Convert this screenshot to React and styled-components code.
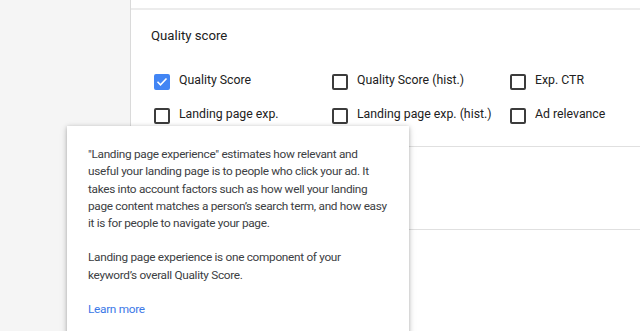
import React from 'react';
import styled, { createGlobalStyle } from 'styled-components';

const GlobalStyle = createGlobalStyle`
  html, body {
    margin: 0;
    padding: 0;
    height: 331px;
    overflow: hidden;
    background: #ffffff;
    font-family: Roboto, "Liberation Sans", Arial, sans-serif;
  }
`;

const Page = styled.div`
  position: relative;
  display: grid;
  grid-template-columns: 131px 1fr;
  height: 331px;
`;

const Sidebar = styled.aside`
  background: #f5f5f5;
  border-right: 1px solid #dadada;
`;

const Main = styled.main`
  display: flex;
  flex-direction: column;
`;

const TopStrip = styled.div`
  height: 8px;
  border-bottom: 2px solid #ececec;
`;

const Section = styled.section`
  padding: ${(p) => p.padding || '0 20px'};
  height: ${(p) => p.height || 'auto'};
  border-bottom: 1px solid #e0e0e0;
`;

const Heading = styled.h3`
  margin: 0 0 17px;
  font-size: 13.2px;
  line-height: 20px;
  font-weight: 400;
  color: #212121;
`;

const OptionGrid = styled.div`
  display: grid;
  grid-template-columns: 178px 178px 1fr;
  grid-auto-rows: 34px;
`;

const Option = styled.label`
  display: flex;
  align-items: center;
  gap: 9px;
  padding-left: 3px;
  font-size: 12.3px;
  color: #212121;
`;

const Box = styled.span`
  box-sizing: border-box;
  width: 16px;
  height: 16px;
  margin-top: 3px;
  border-radius: 2px;
  border: 2px solid ${(p) => (p.checked ? '#4285f4' : '#3c3c3c')};
  background: ${(p) => (p.checked ? '#4285f4' : '#fff')};
  display: flex;
  align-items: center;
  justify-content: center;
`;

const Popup = styled.div`
  position: absolute;
  left: 67px;
  top: 126px;
  width: 342px;
  box-sizing: border-box;
  padding: 20px 21px 24px;
  background: #fff;
  box-shadow: 0 1px 4px rgba(0, 0, 0, 0.25), 0 2px 8px rgba(0, 0, 0, 0.12);
  font-size: 11.8px;
  letter-spacing: -0.3px;
  line-height: 17.3px;
  color: #3c4043;
`;

const Para = styled.p`
  margin: 0 0 17px;
`;

const LearnMore = styled.a`
  color: #3b78e7;
  text-decoration: none;
`;

const Check = () => (
  <svg width="13" height="13" viewBox="0 0 24 24">
    <path d="M3 12.5l6 6L21 6" fill="none" stroke="#fff" strokeWidth="3.2" />
  </svg>
);

const options = [
  { label: 'Quality Score', checked: true },
  { label: 'Quality Score (hist.)' },
  { label: 'Exp. CTR' },
  { label: 'Landing page exp.' },
  { label: 'Landing page exp. (hist.)' },
  { label: 'Ad relevance' },
];

const App = () => (
  <>
    <GlobalStyle />
    <Page>
      <Sidebar />
      <Main>
        <TopStrip />
        <Section padding="16px 20px 15px">
          <Heading>Quality score</Heading>
          <OptionGrid>
            {options.map((o) => (
              <Option key={o.label}>
                <Box checked={o.checked}>{o.checked && <Check />}</Box>
                {o.label}
              </Option>
            ))}
          </OptionGrid>
        </Section>
        <Section height="82px" />
        <Section height="120px" />
      </Main>
      <Popup>
        <Para>
          "Landing page experience" estimates how relevant and useful your landing page is to people who click your ad. It takes into account factors such as how well your landing page content matches a person’s search term, and how easy it is for people to navigate your page.
        </Para>
        <Para>
          Landing page experience is one component of your keyword’s overall Quality Score.
        </Para>
        <LearnMore href="#">Learn more</LearnMore>
      </Popup>
    </Page>
  </>
);

export default App;
